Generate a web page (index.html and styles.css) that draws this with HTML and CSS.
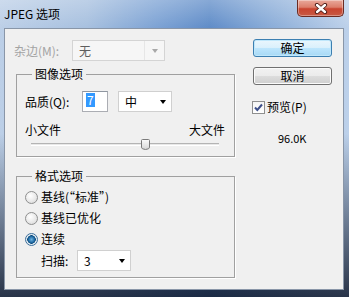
FILE: index.html
```html
<!DOCTYPE html>
<html lang="zh-CN">
<head>
<meta charset="utf-8">
<title>JPEG 选项</title>
<link rel="stylesheet" href="styles.css">
</head>
<body>
<div class="window">
  <div class="titlebar">
    <span class="title">JPEG 选项</span>
    <div class="close">
      <svg width="14" height="11" viewBox="0 0 14 11">
        <path d="M3 2 L11 9 M11 2 L3 9" stroke="#4a1a14" stroke-width="4.2" stroke-linecap="round"/>
        <path d="M3 2 L11 9 M11 2 L3 9" stroke="#ffffff" stroke-width="2.4" stroke-linecap="round"/>
      </svg>
    </div>
  </div>
  <div class="client">
    <div class="left">
      <div class="row">
        <span class="lbl lbl-matte">杂边(M):</span>
        <div class="combo combo-disabled combo-matte"><span class="ctext">无</span><span class="abox"><span class="arrow"></span></span></div>
      </div>

      <fieldset class="group g1">
        <legend>图像选项</legend>
        <div class="gbody gbody1">
          <div class="row">
            <span class="lbl lbl-q">品质(Q):</span>
            <div class="textbox"><span class="sel">7</span></div>
            <div class="combo combo-q"><span class="ctext">中</span><span class="abox"><span class="arrow"></span></span></div>
          </div>
          <div class="sizes"><span>小文件</span><span>大文件</span></div>
          <div class="slider">
            <span class="thumb" style="margin-left:110px">
              <svg width="9" height="11" viewBox="0 0 9 11">
                <defs><linearGradient id="tg" x1="0" y1="0" x2="0" y2="1"><stop offset="0" stop-color="#fbfbfb"/><stop offset="1" stop-color="#d6d6d6"/></linearGradient></defs>
                <path d="M1.5 0.5 H7.5 Q8.5 0.5 8.5 1.5 V8 Q8.5 9 7.5 9.8 L4.5 10.5 L1.5 9.8 Q0.5 9 0.5 8 V1.5 Q0.5 0.5 1.5 0.5 Z" fill="url(#tg)" stroke="#7a7a7a"/>
              </svg>
            </span>
          </div>
        </div>
      </fieldset>

      <fieldset class="group g2">
        <legend>格式选项</legend>
        <div class="gbody gbody2">
          <div class="radio"><span class="rb"></span><span>基线(“标准”)</span></div>
          <div class="radio"><span class="rb"></span><span>基线已优化</span></div>
          <div class="radio"><span class="rb rb-on"></span><span>连续</span></div>
          <div class="row scan">
            <span class="lbl lbl-scan">扫描:</span>
            <div class="combo combo-scan"><span class="ctext">3</span><span class="abox"><span class="arrow"></span></span></div>
          </div>
        </div>
      </fieldset>
    </div>

    <div class="right">
      <div class="btn btn-default">确定</div>
      <div class="btn btn-cancel">取消</div>
      <div class="check">
        <span class="cb">
          <svg width="11" height="11" viewBox="0 0 11 11"><path d="M2 5.5 L4.3 8 L9 2.5" fill="none" stroke="#3d4f8a" stroke-width="2"/></svg>
        </span>
        <span>预览(P)</span>
      </div>
      <div class="size">96.0K</div>
    </div>
  </div>
</div>
</body>
</html>
```

FILE: styles.css
```css
html, body {
  margin: 0;
  padding: 0;
}
body {
  font-family: "Noto Sans CJK SC", "Microsoft YaHei", sans-serif;
  font-size: 12px;
  color: #000;
  width: 349px;
  height: 297px;
  overflow: hidden;
}
.window {
  width: 349px;
  height: 297px;
  display: flex;
  flex-direction: column;
  background:
    linear-gradient(to bottom, rgba(255,255,255,0.25) 0px, rgba(255,255,255,0) 28px),
    linear-gradient(to bottom, rgba(15,25,45,0) 45%, rgba(15,25,45,0.85) 100%),
    linear-gradient(90deg, #bccfe7 0%, #a7c0df 25%, #7ca2d4 45%, #5f8cc8 60%, #84a8d6 75%, #bdd1ea 100%);
}
.titlebar {
  height: 28px;
  display: flex;
  align-items: flex-start;
}
.title {
  margin: 6px 0 0 4px;
  line-height: 16px;
}
.close {
  margin-left: auto;
  margin-right: 5px;
  width: 47px;
  height: 17px;
  box-sizing: border-box;
  border: 1px solid #6b2b22;
  border-top: none;
  border-radius: 0 0 5px 5px;
  background: linear-gradient(to bottom, #e9a99b 0%, #dc7e6b 45%, #c9442f 55%, #c75a44 100%);
  box-shadow: inset 0 0 0 1px rgba(255,255,255,0.35);
  display: flex;
  align-items: center;
  justify-content: center;
}
.client {
  margin: 0 5px 0 4px;
  height: 262px;
  box-sizing: border-box;
  border: 1px solid #8996a8;
  background: #f0f0f0;
  display: flex;
}
.left {
  width: 248px;
  padding: 11px 0 0 9px;
  box-sizing: border-box;
}
.row {
  display: flex;
  align-items: center;
  height: 21px;
}
.lbl { line-height: 16px; }
.lbl-matte { width: 58px; color: #a3a3a3; }
.lbl-q { width: 57px; }
.lbl-scan { width: 36px; }

.combo {
  height: 21px;
  box-sizing: border-box;
  border: 1px solid #d0d0d0;
  background: #fff;
  display: flex;
  align-items: center;
}
.ctext {
  flex: 1;
  padding-left: 6px;
  line-height: 16px;
}
.abox {
  width: 17px;
  height: 100%;
  display: flex;
  align-items: center;
  justify-content: center;
}
.arrow {
  width: 0;
  height: 0;
  border-left: 3.5px solid transparent;
  border-right: 3.5px solid transparent;
  border-top: 4px solid #000;
}
.combo-matte { width: 93px; }
.combo-disabled { background: #f6f6f6; border-color: #d4d4d4; }
.combo-disabled .ctext { color: #5e5e5e; }
.combo-disabled .abox { width: 19px; border-left: 1px solid #e6e6e6; }
.combo-disabled .arrow { border-top-color: #a8a8a8; }
.combo-q { width: 54px; }
.combo-q .ctext { padding-left: 6px; }
.combo-scan { width: 54px; }

.group {
  margin: 0 0 0 2px;
  padding: 0;
  width: 219px;
  min-width: 0;
  box-sizing: border-box;
  border: 1px solid #a0a0a0;
  box-shadow: 1px 1px 0 #ffffff;
}
.group legend {
  margin-left: 15px;
  padding: 0 3px;
  line-height: 16px;
}
.g1 { margin-top: 5px; }
.g2 { margin-top: 11px; }
.gbody { padding-left: 8px; }
.gbody1 { padding-top: 9px; padding-bottom: 6px; }
.gbody2 { padding-top: 3px; padding-bottom: 6px; }

.textbox {
  width: 26px;
  height: 21px;
  box-sizing: border-box;
  border: 1px solid #abadb3;
  border-top-color: #8f96a0;
  background: #fff;
  margin-right: 10px;
  padding: 1px 0 0 3px;
  display: flex;
  align-items: flex-start;
}
.sel {
  background: #3399ff;
  color: #fff;
  line-height: 14px;
  padding: 0 1px;
}
.sizes {
  width: 200px;
  display: flex;
  justify-content: space-between;
  line-height: 16px;
  margin-top: 10px;
}
.slider {
  width: 188px;
  height: 12px;
  margin-left: 6px;
  display: flex;
  align-items: center;
  background:
    linear-gradient(to bottom, #b4b4b4 0, #b4b4b4 1px, #e8e8e8 1px, #e8e8e8 2px, #ffffff 2px, #ffffff 3px) left center / 100% 3px no-repeat;
}
.thumb {
  display: flex;
  width: 9px;
  height: 11px;
}
.radio {
  height: 20px;
  display: flex;
  align-items: center;
  margin-bottom: 1px;
  line-height: 16px;
}
.rb {
  width: 13px;
  height: 13px;
  box-sizing: border-box;
  border-radius: 50%;
  border: 1px solid #8e8f8f;
  background: radial-gradient(circle at 40% 35%, #ffffff 0%, #e9e9e9 55%, #d2d2d2 100%);
  margin-right: 3px;
  display: flex;
  align-items: center;
  justify-content: center;
}
.rb-on {
  border-color: #3d6f9a;
  background: radial-gradient(circle at 50% 50%, #6fb3e0 0, #1f6aa3 3px, #0e4b7c 4px, #dfe9f0 4.5px, #f4f8fb 100%);
}
.scan { margin-top: 1px; }
.lbl-scan { margin-left: 16px; }

.right {
  display: flex;
  flex-direction: column;
  padding-top: 10px;
}
.btn {
  width: 79px;
  height: 18px;
  box-sizing: border-box;
  border: 1px solid #707070;
  border-radius: 3px;
  background: linear-gradient(to bottom, #f2f2f2 0%, #ebebeb 50%, #dddddd 50%, #cfcfcf 100%);
  box-shadow: inset 0 0 0 1px #fbfbfb;
  display: flex;
  align-items: center;
  justify-content: center;
  line-height: 16px;
}
.btn-default {
  border-color: #3c7fb1;
  background: linear-gradient(to bottom, #eaf6fd 0%, #d9f0fc 50%, #bee6fd 50%, #a7d9f5 100%);
  box-shadow: inset 0 0 0 1px #bfe7fb;
}
.btn-cancel { margin-top: 10px; }
.check {
  margin-top: 14px;
  margin-left: -1px;
  height: 16px;
  display: flex;
  align-items: center;
  line-height: 16px;
}
.cb {
  width: 13px;
  height: 13px;
  box-sizing: border-box;
  border: 1px solid #8f8f8f;
  background: linear-gradient(to bottom, #f4f4f4, #ffffff);
  margin-right: 2px;
  display: flex;
  align-items: center;
  justify-content: center;
}
.size {
  margin-top: 15px;
  padding-left: 25px;
  font-size: 11px;
  line-height: 16px;
}
```
